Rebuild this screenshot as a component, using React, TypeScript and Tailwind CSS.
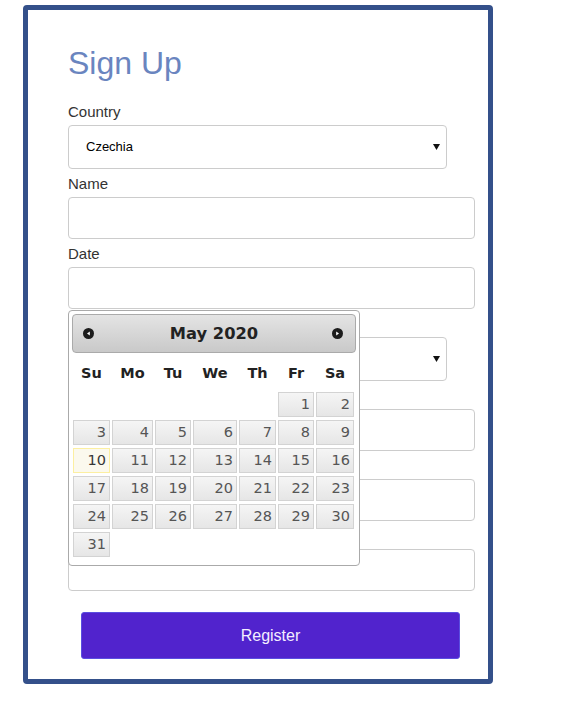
import React from "react";

const days: (number | null)[] = [
  null, null, null, null, null, 1, 2,
  3, 4, 5, 6, 7, 8, 9,
  10, 11, 12, 13, 14, 15, 16,
  17, 18, 19, 20, 21, 22, 23,
  24, 25, 26, 27, 28, 29, 30,
  31,
];

const weekDays = ["Su", "Mo", "Tu", "We", "Th", "Fr", "Sa"];

const Arrow = () => (
  <svg width="7" height="6" viewBox="0 0 7 6">
    <polygon points="0,0 7,0 3.5,6" fill="#111" />
  </svg>
);

const CircleIcon = ({ dir }: { dir: "prev" | "next" }) => (
  <svg width="11" height="11" viewBox="0 0 11 11">
    <circle cx="5.5" cy="5.5" r="5.5" fill="#1c1c1c" />
    {dir === "prev" ? (
      <polygon points="4,5.5 6.8,3.4 6.8,7.6" fill="#fff" />
    ) : (
      <polygon points="7,5.5 4.2,3.4 4.2,7.6" fill="#fff" />
    )}
  </svg>
);

// label row; the ones under the open calendar are covered, so they stay empty
const Label = ({ text }: { text?: string }) => (
  <div className="mt-[5px] mb-[3px] h-[20px] text-[15px] leading-[20px] text-[#333]">
    {text}
  </div>
);

const Input = () => (
  <div className="h-[42px] w-[407px] rounded-[4px] border border-[#cccccc] bg-white" />
);

const Select = ({ value }: { value?: string }) => (
  <div className="flex h-[44px] w-[379px] items-center justify-between rounded-[4px] border border-[#cccccc] bg-white pl-[17px] pr-[6px] text-[13px] text-black">
    <span>{value}</span>
    <Arrow />
  </div>
);

const Calendar = () => (
  <div
    className="absolute left-0 top-[calc(100%+1px)] z-10 w-[292px] rounded-[4px] border border-[#aaaaaa] bg-white p-[3px] pb-[8px]"
    style={{ fontFamily: '"DejaVu Sans", Verdana, sans-serif' }}
  >
    <div className="grid h-[39px] grid-cols-[1fr_auto_1fr] items-center rounded-[4px] border border-[#aaaaaa] bg-linear-to-b from-[#e4e4e4] to-[#c9c9c9]">
      <div className="pl-[10px]">
        <CircleIcon dir="prev" />
      </div>
      <div className="text-[16.3px] font-bold leading-[37px] text-[#222]">
        May 2020
      </div>
      <div className="flex justify-end pr-[12px]">
        <CircleIcon dir="next" />
      </div>
    </div>
    <div className="ml-[1px] mt-[4px] grid grid-cols-[37px_41px_36px_44px_37px_36px_38px] gap-x-[2px]">
      {weekDays.map((d) => (
        <div
          key={d}
          className="h-[33px] text-center text-[14.5px] font-bold leading-[33px] text-[#222]"
        >
          {d}
        </div>
      ))}
    </div>
    <div className="ml-[1px] mt-[2px] grid grid-cols-[37px_41px_36px_44px_37px_36px_38px] gap-x-[2px] gap-y-[3px]">
      {days.map((d, i) =>
        d === null ? (
          <div key={i} className="h-[25px]" />
        ) : d === 10 ? (
          <div
            key={i}
            className="h-[25px] border border-[#fcefa1] bg-[#fbf9ee] pr-[3px] text-right text-[14.5px] leading-[23px] text-[#363636]"
          >
            {d}
          </div>
        ) : (
          <div
            key={i}
            className="h-[25px] border border-[#d3d3d3] bg-linear-to-b from-[#f5f5f5] to-[#e6e6e6] pr-[3px] text-right text-[14.5px] leading-[23px] text-[#555]"
          >
            {d}
          </div>
        )
      )}
    </div>
  </div>
);

export default function App() {
  return (
    <div
      className="min-h-[708px] bg-white pl-[23px] pt-[5px]"
      style={{ fontFamily: '"Liberation Sans", Arial, sans-serif' }}
    >
      <div className="h-[679px] w-[470px] rounded-[4px] border-[5px] border-[#34508a] bg-white pl-[40px] pt-[35px]">
        <h1 className="pb-[15px] text-[32px] leading-[37px] text-[#6a85bf]">
          Sign Up
        </h1>

        <Label text="Country" />
        <Select value="Czechia" />

        <Label text="Name" />
        <Input />

        <Label text="Date" />
        <div className="relative">
          <Input />
          <Calendar />
        </div>

        <Label />
        <Select />

        <Label />
        <Input />

        <Label />
        <Input />

        <Label />
        <Input />

        <button className="ml-[13px] mt-[21px] flex h-[47px] w-[379px] items-center justify-center rounded-[3px] border border-[#5a4ee0] bg-[#5123cd] text-[16px] text-[#f4eeff]">
          Register
        </button>
      </div>
    </div>
  );
}
